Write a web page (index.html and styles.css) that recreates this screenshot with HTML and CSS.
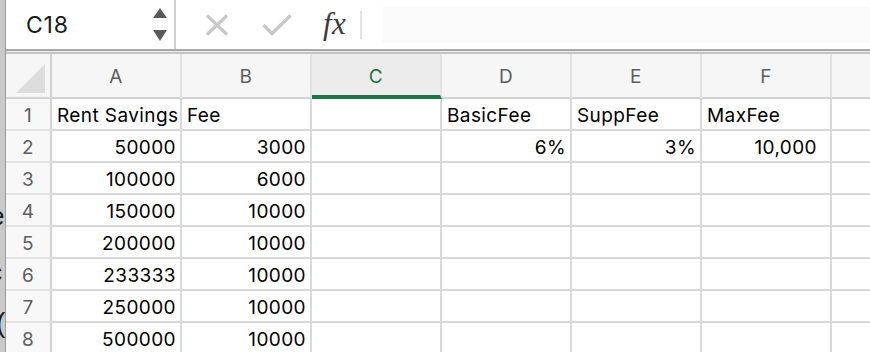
FILE: index.html
```html
<!DOCTYPE html>
<html>
<head>
<meta charset="utf-8">
<link rel="stylesheet" href="styles.css">
</head>
<body>
<div class="screen">
  <div class="behind">
    <span class="g g1">e</span>
    <span class="g g2">c</span>
    <span class="g g3">(</span>
  </div>
  <div class="window">
    <div class="fbar">
      <div class="namebox">
        <span class="ref">C18</span>
        <svg class="spin" width="14" height="34" viewBox="0 0 14 34"><polygon points="0,10 7,0 14,10" fill="#5a5a5a"/><polygon points="0,22 14,22 7,33" fill="#5a5a5a"/></svg>
      </div>
      <div class="actions">
        <svg class="icon-x" width="24" height="22" viewBox="0 0 24 22"><path d="M2 1.5 L22 20.5 M22 1.5 L2 20.5" stroke="#c8c8c8" stroke-width="3.2" fill="none"/></svg>
        <svg class="icon-check" width="30" height="22" viewBox="0 0 30 22"><path d="M1.5 11 L10 19.5 L28.5 1.5" stroke="#c8c8c8" stroke-width="3.4" fill="none"/></svg>
        <span class="fx">fx</span>
        <span class="vsep"></span>
      </div>
      <div class="input"></div>
    </div>
    <div class="sep"></div>
    <div class="sheet">
      <div class="ch corner"><span class="tri"></span></div>
      <div class="ch">A</div>
      <div class="ch">B</div>
      <div class="ch sel">C</div>
      <div class="ch">D</div>
      <div class="ch">E</div>
      <div class="ch">F</div>
      <div class="ch">G</div>

      <div class="rh">1</div>
      <div class="c">Rent Savings</div>
      <div class="c">Fee</div>
      <div class="c"></div>
      <div class="c">BasicFee</div>
      <div class="c">SuppFee</div>
      <div class="c">MaxFee</div>
      <div class="c"></div>

      <div class="rh">2</div>
      <div class="c n">50000</div>
      <div class="c n">3000</div>
      <div class="c"></div>
      <div class="c n">6%</div>
      <div class="c n">3%</div>
      <div class="c n acct">10,000</div>
      <div class="c"></div>

      <div class="rh">3</div>
      <div class="c n">100000</div>
      <div class="c n">6000</div>
      <div class="c"></div><div class="c"></div><div class="c"></div><div class="c"></div><div class="c"></div>

      <div class="rh">4</div>
      <div class="c n">150000</div>
      <div class="c n">10000</div>
      <div class="c"></div><div class="c"></div><div class="c"></div><div class="c"></div><div class="c"></div>

      <div class="rh">5</div>
      <div class="c n">200000</div>
      <div class="c n">10000</div>
      <div class="c"></div><div class="c"></div><div class="c"></div><div class="c"></div><div class="c"></div>

      <div class="rh">6</div>
      <div class="c n">233333</div>
      <div class="c n">10000</div>
      <div class="c"></div><div class="c"></div><div class="c"></div><div class="c"></div><div class="c"></div>

      <div class="rh">7</div>
      <div class="c n">250000</div>
      <div class="c n">10000</div>
      <div class="c"></div><div class="c"></div><div class="c"></div><div class="c"></div><div class="c"></div>

      <div class="rh">8</div>
      <div class="c n">500000</div>
      <div class="c n">10000</div>
      <div class="c"></div><div class="c"></div><div class="c"></div><div class="c"></div><div class="c"></div>
    </div>
  </div>
</div>
</body>
</html>
```

FILE: styles.css
```css
* { box-sizing: border-box; }
html, body { margin: 0; padding: 0; }
body {
  width: 870px;
  height: 352px;
  overflow: hidden;
  background: #ffffff;
  font-family: "Inter", "Liberation Sans", sans-serif;
}
.screen {
  display: flex;
  width: 870px;
  height: 352px;
}
.behind {
  position: relative;
  width: 5px;
  flex: none;
  background: #c9c9c9;
  overflow: hidden;
}
.g {
  position: absolute;
  font-family: "Liberation Sans", sans-serif;
  font-size: 26px;
  line-height: 26px;
  color: #1a1a1a;
}
.g1 { left: -10px; top: 203px; }
.g2 { left: -11px; top: 259px; }
.g3 { left: -4px; top: 310px; font-size: 28px; }

.window {
  flex: 1;
  display: flex;
  flex-direction: column;
  border-left: 1px solid #9c9c9c;
  min-width: 0;
  overflow: hidden;
}
.fbar {
  height: 49px;
  flex: none;
  display: flex;
  background: #ffffff;
}
.namebox {
  width: 170px;
  flex: none;
  display: flex;
  align-items: center;
  padding-left: 20px;
  padding-right: 7px;
  border-right: 2px solid #cfcfcf;
}
.ref {
  flex: 1;
  font-size: 23px;
  color: #1a1a1a;
  letter-spacing: 0.8px;
}
.spin { display: block; margin-top: 1px; }
.actions {
  width: 206px;
  flex: none;
  display: flex;
  align-items: center;
  padding-left: 29px;
}
.icon-x { display: block; }
.icon-check { display: block; margin-left: 33px; }
.fx {
  margin-left: 31px;
  font-family: "Liberation Serif", "DejaVu Serif", serif;
  font-style: italic;
  font-size: 31px;
  color: #3a3a3a;
  line-height: 1;
  margin-top: -2px;
  letter-spacing: 0.5px;
}
.vsep {
  width: 2px;
  height: 28px;
  background: #e3e3e3;
  margin-left: 14px;
}
.input {
  flex: 1;
  margin: 7px 0 6px 0;
  background: #fafafa;
}
.sep {
  height: 5px;
  flex: none;
  border-top: 2px solid #a9a9a9;
  border-bottom: 2px solid #c6c6c6;
  background: #e6e6e6;
}
.sheet {
  flex: 1;
  display: grid;
  grid-template-columns: 46px repeat(7, 130px);
  grid-template-rows: 45px repeat(8, 32px);
  overflow: hidden;
  font-size: 19px;
  letter-spacing: 0.4px;
}
.ch {
  background: #f6f6f6;
  border-right: 2px solid #e2e2e2;
  border-bottom: 2px solid #d2d2d2;
  display: flex;
  align-items: center;
  justify-content: center;
  color: #5e5e5e;
  padding-top: 2px;
}
.ch.sel {
  background: #ececec;
  color: #1f7345;
  border-bottom: 4px solid #1f7345;
  padding-top: 4px;
}
.corner {
  position: relative;
  border-right-color: #d2d2d2;
}
.tri {
  position: absolute;
  left: 10px;
  bottom: 4px;
  width: 0;
  height: 0;
  border-style: solid;
  border-width: 0 0 29px 29px;
  border-color: transparent transparent #dcdcdc transparent;
}
.rh {
  background: #f8f8f8;
  border-right: 2px solid #d2d2d2;
  border-bottom: 2px solid #e4e4e4;
  display: flex;
  align-items: center;
  justify-content: center;
  color: #5e5e5e;
  padding-top: 2px;
}
.c {
  border-right: 2px solid #d9d9d9;
  border-bottom: 2px solid #d9d9d9;
  display: flex;
  align-items: center;
  padding: 2px 4px 0 5px;
  color: #000000;
  white-space: nowrap;
}
.c.n { justify-content: flex-end; }
.c.acct { padding-right: 13px; }
```
